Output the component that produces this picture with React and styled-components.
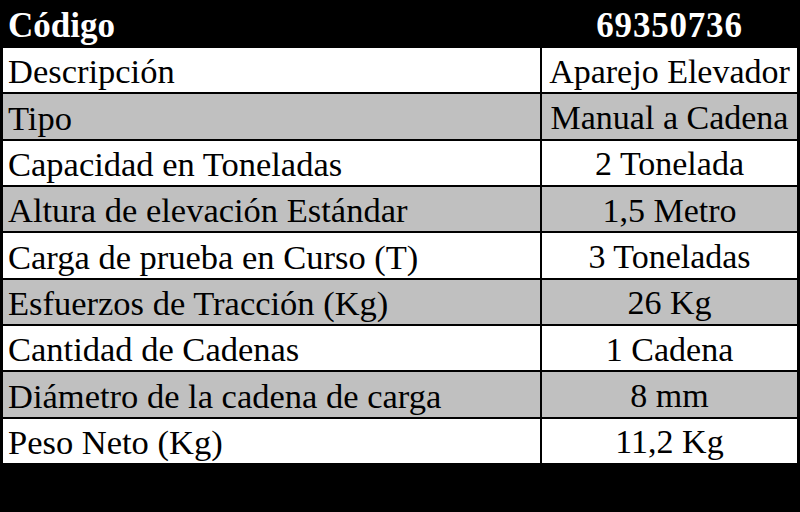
import React from "react";
import styled, { createGlobalStyle } from "styled-components";

const GlobalStyle = createGlobalStyle`
  html, body {
    margin: 0;
    padding: 0;
    background: #000;
  }
  #root {
    width: 800px;
    height: 512px;
  }
`;

const Page = styled.div`
  width: 800px;
  height: 512px;
  background: #000;
  box-sizing: border-box;
  padding-left: 3px;
  font-family: "Liberation Serif", "Times New Roman", serif;
  overflow: hidden;
`;

const Header = styled.div`
  display: grid;
  grid-template-columns: 537px 255px;
  column-gap: 2px;
  height: 48px;
  color: #fff;
  font-weight: bold;
  font-size: 35px;
`;

const HeaderCell = styled.div`
  display: flex;
  align-items: center;
  justify-content: ${(p) => (p.$center ? "center" : "flex-start")};
  padding: 2px 0 0 ${(p) => (p.$center ? "0" : "5px")};
  letter-spacing: ${(p) => (p.$center ? "0.8px" : "0")};
  line-height: 1;
`;

const Table = styled.div`
  display: grid;
  grid-template-columns: 537px 255px;
  grid-auto-rows: 1fr;
  column-gap: 2px;
  row-gap: 2px;
  height: 415px;
  background: #000;
`;

const Cell = styled.div`
  display: flex;
  align-items: center;
  justify-content: ${(p) => (p.$center ? "center" : "flex-start")};
  padding: ${(p) => (p.$center ? "3px 0 0 0" : "3px 0 0 5px")};
  box-sizing: border-box;
  background: ${(p) => (p.$shaded ? "#c0c0c0" : "#ffffff")};
  color: #000;
  font-size: ${(p) => (p.$center ? "34px" : "34.5px")};
  line-height: 1;
  white-space: nowrap;
`;

const rows = [
  ["Descripción", "Aparejo Elevador"],
  ["Tipo", "Manual a Cadena"],
  ["Capacidad en Toneladas", "2 Tonelada"],
  ["Altura de elevación Estándar", "1,5 Metro"],
  ["Carga de prueba en Curso (T)", "3 Toneladas"],
  ["Esfuerzos de Tracción (Kg)", "26 Kg"],
  ["Cantidad de Cadenas", "1 Cadena"],
  ["Diámetro de la cadena de carga", "8 mm"],
  ["Peso Neto (Kg)", "11,2 Kg"],
];

export default function App() {
  return (
    <>
      <GlobalStyle />
      <Page>
        <Header>
          <HeaderCell>Código</HeaderCell>
          <HeaderCell $center>69350736</HeaderCell>
        </Header>
        <Table>
          {rows.map(([label, value], i) => (
            <React.Fragment key={label}>
              <Cell $shaded={i % 2 === 1}>{label}</Cell>
              <Cell $shaded={i % 2 === 1} $center>
                {value}
              </Cell>
            </React.Fragment>
          ))}
        </Table>
      </Page>
    </>
  );
}
